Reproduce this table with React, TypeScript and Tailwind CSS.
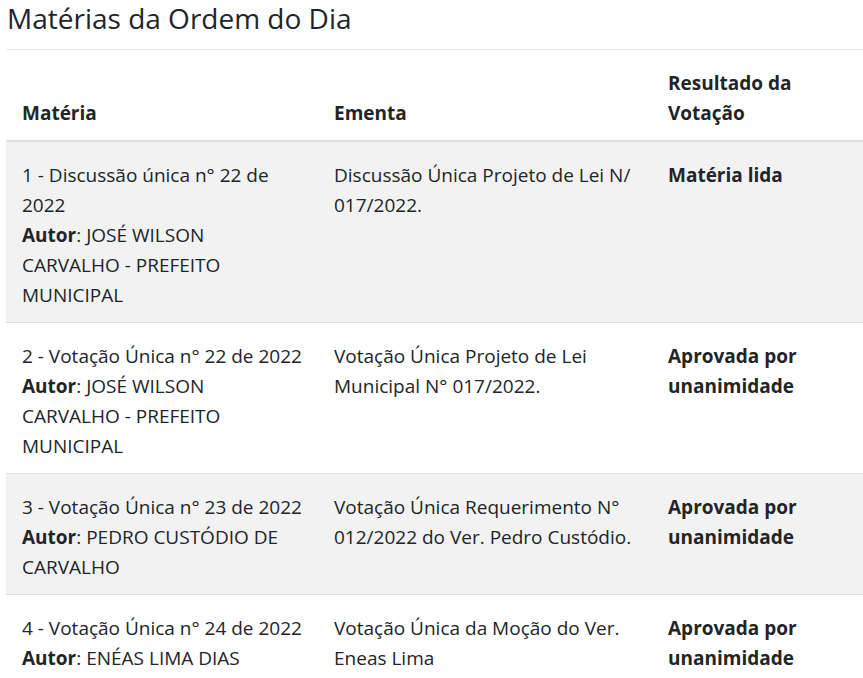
type Row = {
    materia: string[]
    autor: string[]
    ementa: string[]
    resultado: string[]
}

const rows: Row[] = [
    {
        materia: ["1 - Discussão única n° 22 de", "2022"],
        autor: ["JOSÉ WILSON", "CARVALHO - PREFEITO", "MUNICIPAL"],
        ementa: ["Discussão Única Projeto de Lei N/", "017/2022."],
        resultado: ["Matéria lida"],
    },
    {
        materia: ["2 - Votação Única n° 22 de 2022"],
        autor: ["JOSÉ WILSON", "CARVALHO - PREFEITO", "MUNICIPAL"],
        ementa: ["Votação Única Projeto de Lei", "Municipal N° 017/2022."],
        resultado: ["Aprovada por", "unanimidade"],
    },
    {
        materia: ["3 - Votação Única n° 23 de 2022"],
        autor: ["PEDRO CUSTÓDIO DE", "CARVALHO"],
        ementa: ["Votação Única Requerimento N°", "012/2022 do Ver. Pedro Custódio."],
        resultado: ["Aprovada por", "unanimidade"],
    },
    {
        materia: ["4 - Votação Única n° 24 de 2022"],
        autor: ["ENÉAS LIMA DIAS"],
        ementa: ["Votação Única da Moção do Ver.", "Eneas Lima"],
        resultado: ["Aprovada por", "unanimidade"],
    },
]

function Lines({ lines }: { lines: string[] }) {
    return (
        <>
            {lines.map((l, i) => (
                <div key={i} className="whitespace-nowrap">{l}</div>
            ))}
        </>
    )
}

export default function App() {
    return (
        <div className="pl-[6px] bg-white min-h-screen text-[#212529] font-['Open_Sans',sans-serif]">
            <h2 className="text-[28px] leading-[36px] font-normal pl-px">Matérias da Ordem do Dia</h2>
            <hr className="mt-[13px] border-0 border-t border-[#e5e5e5]" />

            <table className="w-full table-fixed border-collapse text-[19px] leading-[30px]">
                <colgroup>
                    <col className="w-[312px]" />
                    <col className="w-[334px]" />
                    <col />
                </colgroup>
                <thead>
                    <tr className="border-b-2 border-[#dee2e6]">
                        <th className="text-left align-bottom font-bold px-4 pt-[18px] pb-[12px]">Matéria</th>
                        <th className="text-left align-bottom font-bold px-4 pt-[18px] pb-[12px]">Ementa</th>
                        <th className="text-left align-bottom font-bold px-4 pt-[18px] pb-[12px]">
                            <div>Resultado da</div>
                            <div>Votação</div>
                        </th>
                    </tr>
                </thead>
                <tbody>
                    {rows.map((row, i) => (
                        <tr key={i} className={`border-b border-[#dee2e6] ${i % 2 === 0 ? 'bg-[#f2f2f2]' : 'bg-white'}`}>
                            <td className="align-top px-4 pt-[18px] pb-[12px]">
                                <Lines lines={row.materia} />
                                {row.autor.map((l, j) => (
                                    <div key={j} className="whitespace-nowrap">
                                        {j === 0 && <><b className="font-bold">Autor</b>: </>}
                                        {l}
                                    </div>
                                ))}
                            </td>
                            <td className="align-top px-4 pt-[18px] pb-[12px]">
                                <Lines lines={row.ementa} />
                            </td>
                            <td className="align-top px-4 pt-[18px] pb-[12px] font-bold">
                                <Lines lines={row.resultado} />
                            </td>
                        </tr>
                    ))}
                </tbody>
            </table>
        </div>
    )
}
